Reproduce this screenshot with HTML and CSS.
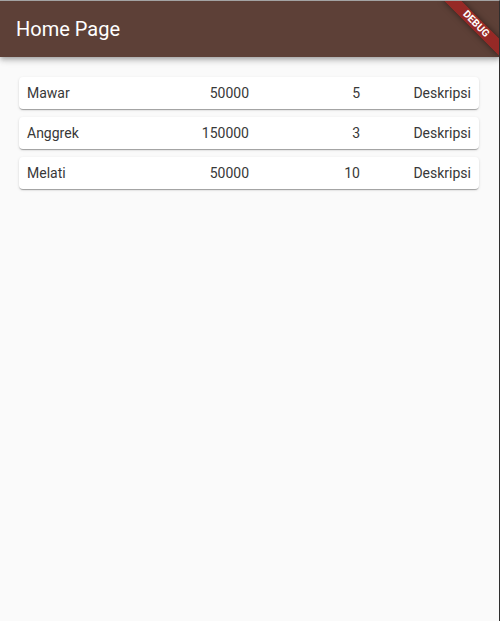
FILE: index.html
```html
<!DOCTYPE html>
<html>
<head>
<meta charset="utf-8">
<link rel="stylesheet" href="styles.css">
</head>
<body>
<div class="frame">
  <header class="appbar"><h1 class="title">Home Page</h1></header>
  <div class="banner"><span class="banner-text">DEBUG</span></div>
  <main class="list">
    <div class="card">
      <span class="cell cell-name">Mawar</span>
      <span class="cell">50000</span>
      <span class="cell">5</span>
      <span class="cell">Deskripsi</span>
    </div>
    <div class="card">
      <span class="cell cell-name">Anggrek</span>
      <span class="cell">150000</span>
      <span class="cell">3</span>
      <span class="cell">Deskripsi</span>
    </div>
    <div class="card">
      <span class="cell cell-name">Melati</span>
      <span class="cell">50000</span>
      <span class="cell">10</span>
      <span class="cell">Deskripsi</span>
    </div>
  </main>
</div>
</body>
</html>
```

FILE: styles.css
```css
html, body {
  margin: 0;
  padding: 0;
}
body {
  font-family: Roboto, "Liberation Sans", sans-serif;
  background: #fafafa;
}
.frame {
  position: relative;
  width: 500px;
  height: 621px;
  box-sizing: border-box;
  border-top: 1px solid #a3a3a3;
  border-right: 1px solid #2e2e2e;
  background: #fafafa;
  overflow: hidden;
}
.appbar {
  position: relative;
  z-index: 1;
  height: 56px;
  background: #5d4037;
  display: flex;
  align-items: center;
  padding: 0 16px;
  box-shadow: 0 2px 4px -1px rgba(0,0,0,.2), 0 4px 5px 0 rgba(0,0,0,.14), 0 1px 10px 0 rgba(0,0,0,.12);
}
.title {
  margin: 0;
  font-size: 20px;
  font-weight: 400;
  color: #ffffff;
  line-height: 24px;
}
.banner {
  position: absolute;
  z-index: 2;
  top: 17px;
  left: 436px;
  width: 80px;
  height: 12px;
  background: rgba(183, 28, 28, 0.63);
  transform: rotate(45deg);
  display: flex;
  align-items: center;
  justify-content: center;
  box-shadow: 0 0 6px rgba(0,0,0,.5);
}
.banner-text {
  color: #ffffff;
  font-size: 10.2px;
  font-weight: 700;
  line-height: 1;
}
.list {
  display: flex;
  flex-direction: column;
  padding: 16px 16px 16px 15px;
}
.card {
  margin: 4px;
  padding: 8px;
  background: #ffffff;
  border-radius: 4px;
  box-shadow: 0 2px 1px -1px rgba(0,0,0,.2), 0 1px 1px 0 rgba(0,0,0,.14), 0 1px 3px 0 rgba(0,0,0,.12);
  display: grid;
  grid-template-columns: 1fr 1fr 1fr 1fr;
  font-size: 14px;
  line-height: 16px;
  color: #383838;
}
.cell {
  text-align: right;
}
.cell-name {
  text-align: left;
}
```
